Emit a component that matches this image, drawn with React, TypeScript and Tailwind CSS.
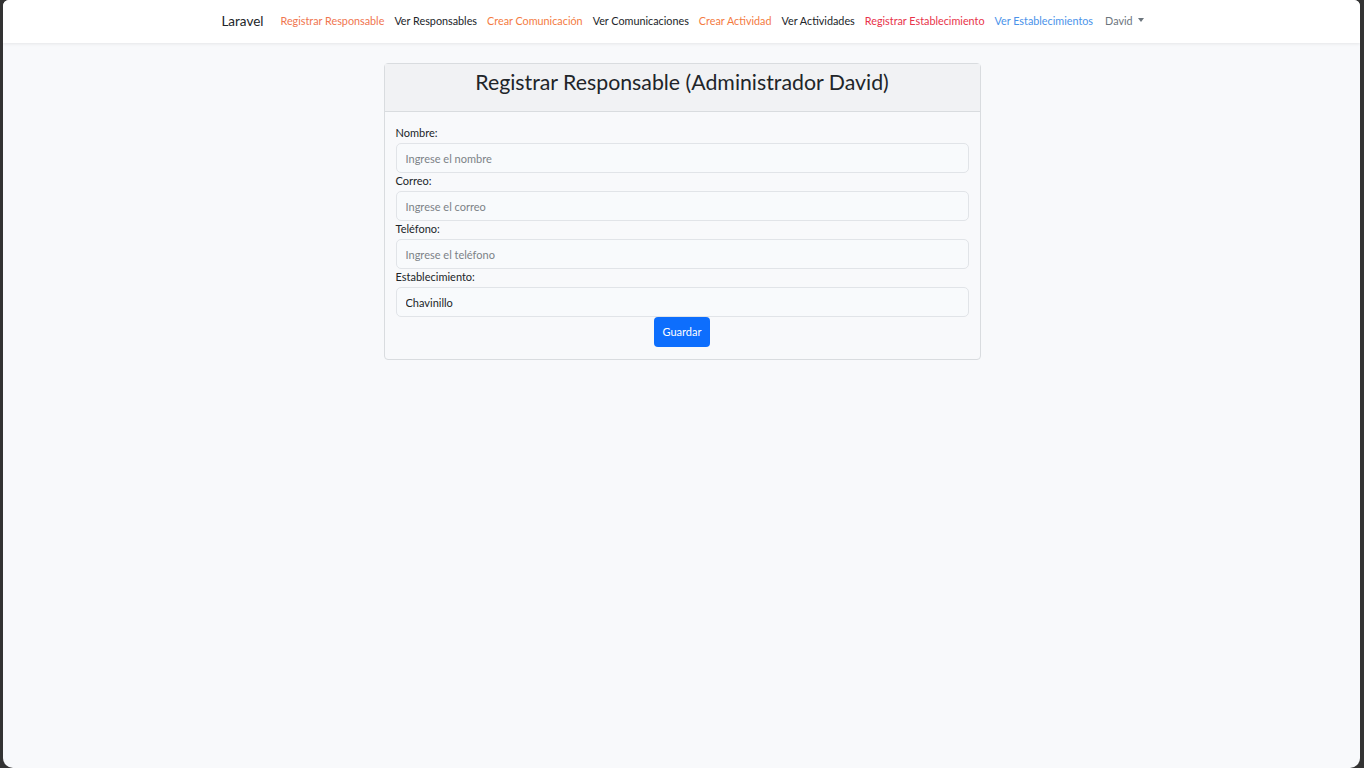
import { useState } from "react";

const links = [
    { label: "Registrar Responsable", color: "text-[#f0764f]" },
    { label: "Ver Responsables", color: "text-[#212529]" },
    { label: "Crear Comunicación", color: "text-[#f47b3f]" },
    { label: "Ver Comunicaciones", color: "text-[#212529]" },
    { label: "Crear Actividad", color: "text-[#f47b3f]" },
    { label: "Ver Actividades", color: "text-[#212529]" },
    { label: "Registrar Establecimiento", color: "text-[#e8334a]" },
    { label: "Ver Establecimientos", color: "text-[#4a93ea]" },
];

export default function App() {
    const [form, setForm] = useState({ nombre: "", correo: "", telefono: "", establecimiento: "Chavinillo" });

    const inputClass =
        "w-full h-[30px] rounded-[5px] border border-[#e1e4e8] bg-[#f8fafc] px-[9px] text-[11px] text-[#212529] placeholder:text-[#7c8287] outline-none";

    return (
        <div className="h-[768px] w-[1364px] bg-[#333] overflow-hidden" style={{ fontFamily: "Lato, 'Noto Sans', sans-serif" }}>
            <div className="ml-[3px] mr-[4px] h-full rounded-t-[6px] rounded-b-[10px] bg-[#f8f9fb] overflow-hidden">
                {/* Navbar */}
                <nav className="h-[43px] bg-white shadow-[0_1px_3px_rgba(0,0,0,0.08)] flex items-center justify-center">
                    <div className="flex items-center pl-[2px] pb-[1px]">
                        <a href="#" className="text-[13.5px] text-[#212529] mr-[17px]">Laravel</a>
                        <div className="flex items-center gap-[10px] text-[10.8px]">
                            {links.map((l) => (
                                <a key={l.label} href="#" className={l.color}>{l.label}</a>
                            ))}
                            <a href="#" className="text-[#6c757d] flex items-center gap-[5px] ml-[2px]">
                                David
                                <span className="inline-block w-0 h-0 border-l-[3.5px] border-r-[3.5px] border-t-[4px] border-l-transparent border-r-transparent border-t-[#6c757d] mb-[2px]" />
                            </a>
                        </div>
                    </div>
                </nav>

                {/* Card */}
                <div className="flex justify-center pt-[20px] pl-[1px]">
                    <div className="w-[597px] rounded-[4px] border border-[#d9dcdf] bg-[#f8f9fb]">
                        <div className="h-[48px] bg-[#f1f2f4] border-b border-[#d9dcdf] flex items-center justify-center pb-[10px]">
                            <h1 className="text-[21.3px] text-[#212529] leading-none">Registrar Responsable (Administrador David)</h1>
                        </div>
                        <form className="px-[11px] pt-[14px] pb-[12px] flex flex-col text-[11px] text-[#212529]" onSubmit={(e) => e.preventDefault()}>
                            <label className="leading-[14px] mb-[3px]">Nombre:</label>
                            <input
                                className={inputClass}
                                placeholder="Ingrese el nombre"
                                value={form.nombre}
                                onChange={(e) => setForm({ ...form, nombre: e.target.value })}
                            />
                            <label className="leading-[14px] mt-[1px] mb-[3px]">Correo:</label>
                            <input
                                className={inputClass}
                                placeholder="Ingrese el correo"
                                value={form.correo}
                                onChange={(e) => setForm({ ...form, correo: e.target.value })}
                            />
                            <label className="leading-[14px] mt-[1px] mb-[3px]">Teléfono:</label>
                            <input
                                className={inputClass}
                                placeholder="Ingrese el teléfono"
                                value={form.telefono}
                                onChange={(e) => setForm({ ...form, telefono: e.target.value })}
                            />
                            <label className="leading-[14px] mt-[1px] mb-[3px]">Establecimiento:</label>
                            <input
                                className={inputClass}
                                value={form.establecimiento}
                                onChange={(e) => setForm({ ...form, establecimiento: e.target.value })}
                            />
                            <div className="flex justify-center">
                                <button type="submit" className="h-[30px] px-[9px] rounded-[4px] bg-[#0d6efd] text-white text-[11px]">
                                    Guardar
                                </button>
                            </div>
                        </form>
                    </div>
                </div>
            </div>
        </div>
    );
}
